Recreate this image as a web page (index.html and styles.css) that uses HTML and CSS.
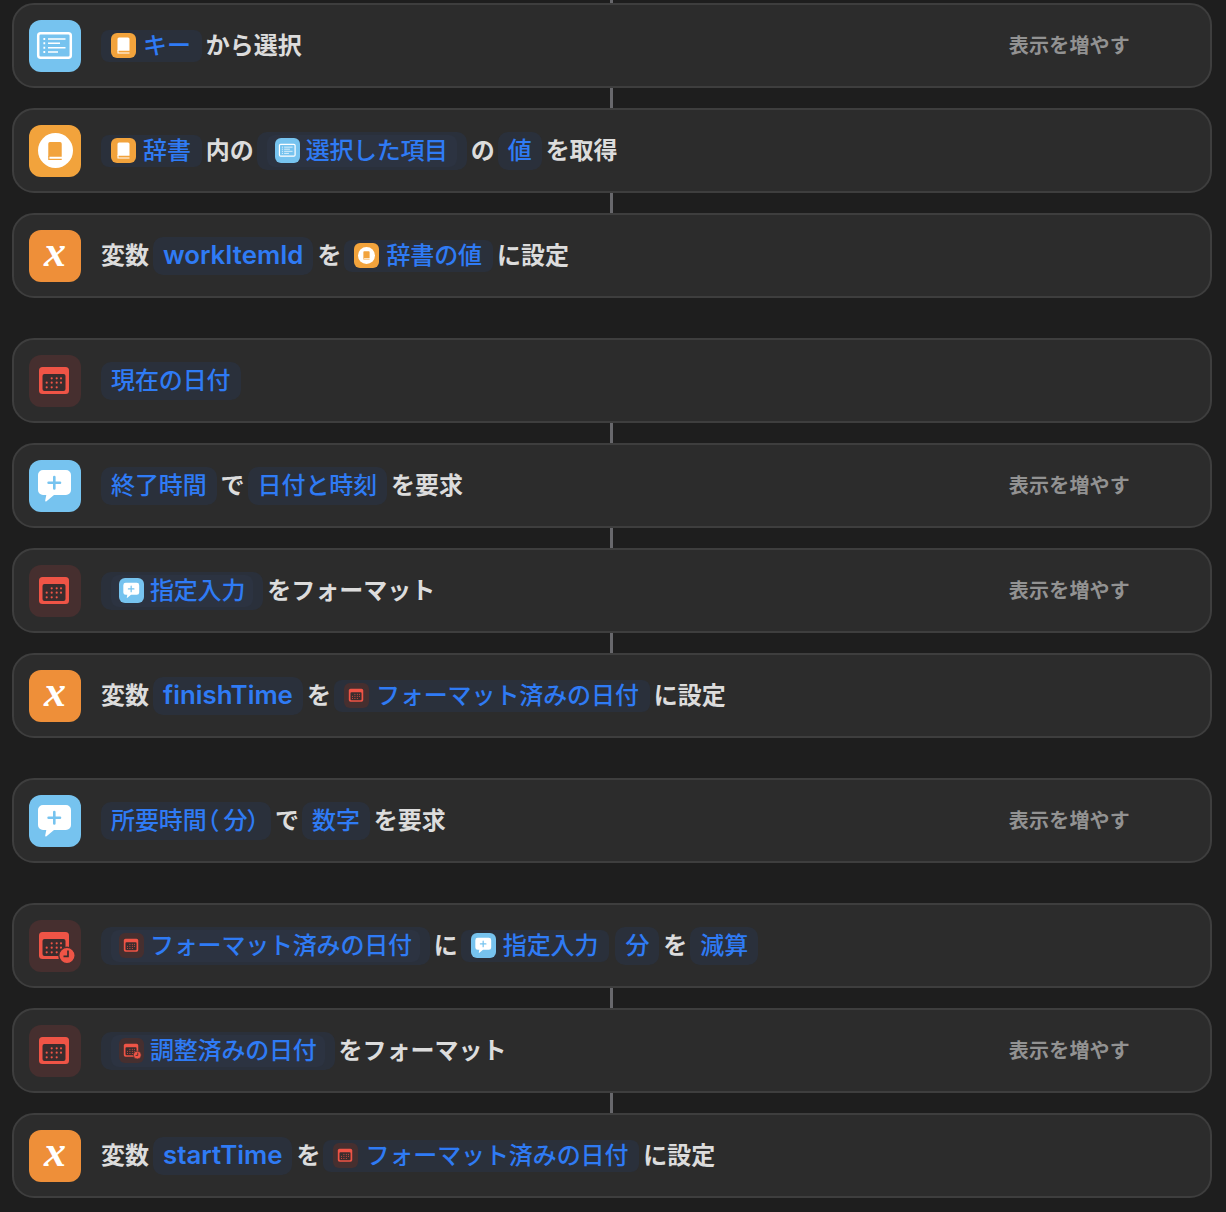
FILE: index.html
```html
<!DOCTYPE html>
<html lang="ja">
  <head>
    <meta charset="UTF-8" />
    <title>ショートカット</title>
    <link rel="stylesheet" href="styles.css">
  </head>
  <body>
    <svg class="defs" width="0" height="0">
      <symbol id="i-list" viewBox="0 0 52 52">
        <rect x="9.200" y="13.200" width="32.600" height="24.600" rx="2.500" fill="none" stroke="currentColor" stroke-width="2.500" />
        <path d="M19 19h17.500M19 23.300h12M19 27.700h17.500M19 32h10" fill="none" stroke="currentColor" stroke-width="1.500" />
        <path d="M14.400 19h1.800M14.400 23.300h1.800M14.400 27.700h1.800M14.400 32h1.800" fill="none" stroke="currentColor" stroke-width="2" />
      </symbol>
      <symbol id="i-book" viewBox="0 0 25 25">
        <path d="M8 4.500h9a1.500 1.500 0 0 1 1.500 1.500v11.700h-12v-11.700a1.500 1.500 0 0 1 1.500-1.500z" fill="currentColor" />
        <path d="M7 17v3h11.500" fill="none" stroke="currentColor" stroke-width="1.100" />
      </symbol>
      <symbol id="i-bubble" viewBox="0 0 52 52">
        <path d="M14 10h23a5 5 0 0 1 5 5v15a5 5 0 0 1-5 5h-12l-7.500 6.200c-.8.6-1.500.2-1.300-.7l1.100-5.500h-3.300a5 5 0 0 1-5-5v-15a5 5 0 0 1 5-5z" fill="#fff" />
        <path d="M25.300 17v11.400M19.600 22.700h11.400" fill="none" stroke="#76c3ef" stroke-width="2.600" stroke-linecap="round" />
      </symbol>
      <symbol id="i-cal" viewBox="0 0 52 52">
        <rect x="10" y="12" width="30" height="27" rx="3.500" fill="currentColor" />
        <rect x="13.500" y="19" width="23" height="17" rx="2" fill="#3a2c2d" />
        <g fill="currentColor">
          <circle cx="22.700" cy="23.300" r="1.100" /><circle cx="27.700" cy="23.300" r="1.100" /><circle cx="32" cy="23.300" r="1.100" />
          <circle cx="17.700" cy="27.700" r="1.100" /><circle cx="22.700" cy="27.700" r="1.100" /><circle cx="27.700" cy="27.700" r="1.100" /><circle cx="32" cy="27.700" r="1.100" />
          <circle cx="17.700" cy="32.300" r="1.100" /><circle cx="22.700" cy="32.300" r="1.100" /><circle cx="27.700" cy="32.300" r="1.100" />
        </g>
      </symbol>
      <symbol id="i-calclock" viewBox="0 0 52 52">
        <use href="#i-cal" width="52" height="52" />
        <circle cx="38" cy="35.500" r="8.200" fill="currentColor" stroke="#462f2f" stroke-width="1.400" />
        <path d="M39 30.500v5.800h-4.500" fill="none" stroke="#3a2c2d" stroke-width="1.700" />
      </symbol>
    </svg>

    <div class="link link-top"></div>

    <div class="card">
      <div class="app app-sky"><svg><use href="#i-list" /></svg></div>
      <div class="line">
        <span class="chip chip-short"><span class="mini mini-book"><svg><use href="#i-book" /></svg></span>キー</span>
        <span class="word">から選択</span>
      </div>
      <span class="more">表示を増やす</span>
    </div>
    <div class="link"></div>
    <div class="card">
      <div class="app app-orange"><span class="disc"><svg><use href="#i-book" /></svg></span></div>
      <div class="line">
        <span class="chip chip-short"><span class="mini mini-book"><svg><use href="#i-book" /></svg></span>辞書</span>
        <span class="word one-half">内の</span>
        <span class="wrap"><span class="chip chip-short snug"><span class="mini mini-sky"><svg><use href="#i-list" /></svg></span>選択した項目</span></span>
        <span class="word one">の</span>
        <span class="chip">値</span>
        <span class="word">を取得</span>
      </div>
    </div>
    <div class="link"></div>
    <div class="card">
      <div class="app app-var">x</div>
      <div class="line">
        <span class="word">変数</span>
        <span class="chip latin">workItemId</span>
        <span class="word one">を</span>
        <span class="chip chip-short"><span class="mini mini-ring"><span class="ring"><svg><use href="#i-book" /></svg></span></span>辞書の値</span>
        <span class="word">に設定</span>
      </div>
    </div>

    <div class="card card-next">
      <div class="app app-red"><svg><use href="#i-cal" /></svg></div>
      <div class="line">
        <span class="chip">現在の日付</span>
      </div>
    </div>
    <div class="link"></div>
    <div class="card">
      <div class="app app-sky"><svg><use href="#i-bubble" /></svg></div>
      <div class="line">
        <span class="chip">終了時間</span>
        <span class="word one">で</span>
        <span class="chip">日付と時刻</span>
        <span class="word">を要求</span>
      </div>
      <span class="more">表示を増やす</span>
    </div>
    <div class="link"></div>
    <div class="card">
      <div class="app app-red"><svg><use href="#i-cal" /></svg></div>
      <div class="line">
        <span class="wrap"><span class="chip chip-short"><span class="mini mini-sky"><svg><use href="#i-bubble" /></svg></span>指定入力</span></span>
        <span class="word">をフォーマット</span>
      </div>
      <span class="more">表示を増やす</span>
    </div>
    <div class="link"></div>
    <div class="card">
      <div class="app app-var">x</div>
      <div class="line">
        <span class="word">変数</span>
        <span class="chip latin">finishTime</span>
        <span class="word one">を</span>
        <span class="chip chip-short"><span class="mini mini-red"><svg><use href="#i-cal" /></svg></span>フォーマット済みの日付</span>
        <span class="word">に設定</span>
      </div>
    </div>

    <div class="card card-next">
      <div class="app app-sky"><svg><use href="#i-bubble" /></svg></div>
      <div class="line">
        <span class="chip parens"><span>所要時間（<span class="parens-mid">分</span>）</span></span>
        <span class="word one">で</span>
        <span class="chip">数字</span>
        <span class="word">を要求</span>
      </div>
      <span class="more">表示を増やす</span>
    </div>

    <div class="card card-next">
      <div class="app app-red"><svg><use href="#i-calclock" /></svg></div>
      <div class="line">
        <span class="wrap"><span class="chip chip-short"><span class="mini mini-red"><svg><use href="#i-cal" /></svg></span>フォーマット済みの日付</span></span>
        <span class="word one">に</span>
        <span class="chip chip-short"><span class="mini mini-sky"><svg><use href="#i-bubble" /></svg></span>指定入力</span>
        <span class="chip chip-after">分</span>
        <span class="word one">を</span>
        <span class="chip">減算</span>
      </div>
    </div>
    <div class="link"></div>
    <div class="card">
      <div class="app app-red"><svg><use href="#i-cal" /></svg></div>
      <div class="line">
        <span class="wrap"><span class="chip chip-short"><span class="mini mini-red"><svg><use href="#i-calclock" /></svg></span>調整済みの日付</span></span>
        <span class="word">をフォーマット</span>
      </div>
      <span class="more">表示を増やす</span>
    </div>
    <div class="link"></div>
    <div class="card">
      <div class="app app-var">x</div>
      <div class="line">
        <span class="word">変数</span>
        <span class="chip latin">startTime</span>
        <span class="word one">を</span>
        <span class="chip chip-short"><span class="mini mini-red"><svg><use href="#i-cal" /></svg></span>フォーマット済みの日付</span>
        <span class="word">に設定</span>
      </div>
    </div>
  </body>
</html>
```

FILE: styles.css
```css
html {
  background-color: #1e1e1e;
}
body {
  margin: 0;
  height: 1212px;
  overflow: hidden;
  background-color: #1e1e1e;
  font-family: "Noto Sans CJK JP", "Noto Sans", sans-serif;
}
.defs {
  position: absolute;
}
.link {
  width: 3px;
  height: 20px;
  margin-left: 610px;
  background-color: #68686c;
}
.link-top {
  height: 3px;
}
.card {
  box-sizing: border-box;
  display: flex;
  align-items: center;
  width: 1200px;
  height: 85px;
  margin-left: 12px;
  padding-left: 15px;
  background-color: #2c2c2c;
  border: 2px solid #3e3e3e;
  border-radius: 22px;
}
.card-next {
  margin-top: 40px;
}
.app {
  display: flex;
  align-items: center;
  justify-content: center;
  flex: none;
  width: 52px;
  height: 52px;
  border-radius: 12px;
}
.app svg {
  width: 52px;
  height: 52px;
}
.app-sky {
  background-color: #76c3ef;
  color: #fff;
}
.app-orange {
  background-color: #f2a33c;
}
.app-var {
  box-sizing: border-box;
  padding-bottom: 9px;
  background-color: #ee8f39;
  color: #fff;
  font-family: "Liberation Serif", serif;
  font-size: 44px;
  font-style: italic;
  font-weight: 700;
  line-height: 43px;
}
.app-red {
  background-color: #462f2f;
  color: #ef5446;
}
.disc {
  display: flex;
  align-items: center;
  justify-content: center;
  width: 35px;
  height: 35px;
  border-radius: 50%;
  background-color: #fff;
  color: #f2a33c;
}
.disc svg {
  width: 28px;
  height: 28px;
}
.line {
  display: flex;
  align-items: center;
  gap: 4px;
  margin-left: 20px;
  color: #dcdcdc;
  font-size: 24px;
  font-weight: 700;
  white-space: nowrap;
}
.word {
  padding-bottom: 4px;
}
.one {
  width: 23px;
}
.one-half {
  width: 47px;
}
.chip,
.wrap {
  display: inline-flex;
  align-items: center;
  box-sizing: border-box;
  height: 38px;
  padding: 0 10px;
  border-radius: 10px;
  background-color: #2a303b;
  color: #2f7bf5;
  font-weight: 500;
}
/* glyphs sit low in the CJK font, pull the text up and keep the icon centred */
.chip {
  padding-bottom: 4px;
  letter-spacing: -0.1px;
}
.chip .mini {
  margin-top: 4px;
}
.chip-short {
  height: 32px;
  gap: 7px;
  padding-right: 11px;
  border-radius: 8px;
}
.wrap .chip-short {
  background-color: #2c3341;
  padding-left: 8px;
  padding-right: 8px;
  gap: 6px;
  letter-spacing: -0.2px;
}
.wrap .snug {
  letter-spacing: -0.35px;
  padding-right: 9px;
}
.parens {
  font-feature-settings: "palt";
  width: 170px;
}
.parens-mid {
  margin-left: 5px;
}
.chip-after {
  margin-left: 2px;
}
.latin {
  padding: 0 10px 2px 10px;
  font-family: Inter, sans-serif;
  font-size: 25.800px;
  font-weight: 600;
  letter-spacing: 0;
}
.mini {
  display: flex;
  align-items: center;
  justify-content: center;
  flex: none;
  width: 25px;
  height: 25px;
  border-radius: 6px;
}
.mini svg {
  width: 25px;
  height: 25px;
}
.mini-book {
  background-color: #f2a33c;
  color: #fff;
}
.mini-sky {
  background-color: #76c3ef;
  color: #fff;
}
.mini-red {
  background-color: #462f2f;
  color: #ef5446;
}
.mini-ring {
  background-color: #f2a33c;
}
.ring {
  display: flex;
  align-items: center;
  justify-content: center;
  width: 17px;
  height: 17px;
  border-radius: 50%;
  background-color: #fff;
  color: #f2a33c;
}
.ring svg {
  width: 13px;
  height: 13px;
}
.more {
  margin-left: auto;
  margin-right: 80px;
  padding-bottom: 2px;
  color: #929292;
  font-size: 20px;
  font-weight: 700;
  letter-spacing: 0.2px;
}
```
